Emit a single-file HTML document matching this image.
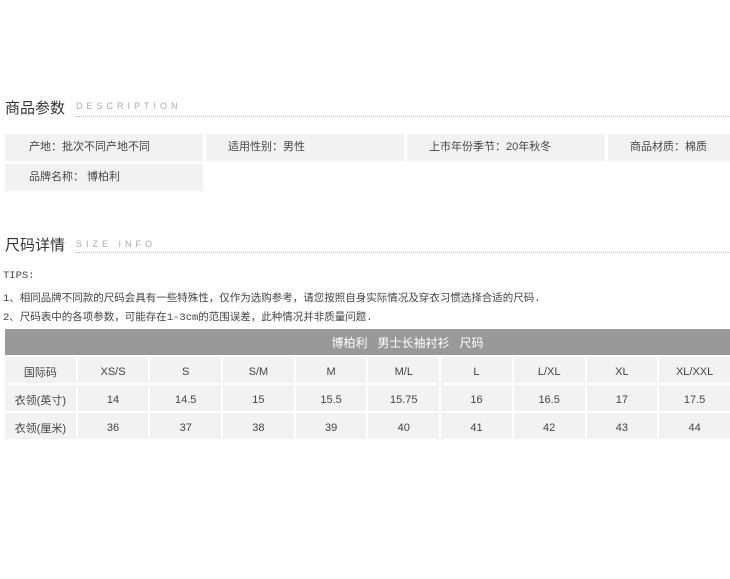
<!DOCTYPE html>
<html><head><meta charset="utf-8"><style>
*{margin:0;padding:0;box-sizing:border-box}
body{width:730px;height:579px;background:#fff;font-family:"Liberation Sans","Noto Sans CJK SC",sans-serif;color:#333;position:relative;overflow:hidden}
.h{position:absolute;left:5px;font-size:15px;color:#333;}
.en{position:absolute;font-size:9px;letter-spacing:4px;color:#aaa;font-family:"Liberation Sans",sans-serif}
.dot{position:absolute;height:0;border-top:1px dotted #bbb;right:0}
.c{position:absolute;background:#f2f2f2;height:27px;line-height:27px;font-size:11px;color:#444}
.t{position:absolute;font-size:10.5px;color:#444;font-family:"Liberation Mono","Noto Sans CJK SC",monospace}
table{position:absolute;left:5px;top:329px;width:727px;border-collapse:separate;border-spacing:0;table-layout:fixed}
td{background:#f2f2f2;text-align:center;font-size:11px;color:#444;height:28px;padding-top:3px;border-right:2px solid #fff;border-bottom:2px solid #fff}
th{background:#999;color:#fff;font-weight:normal;font-size:12px;height:28px;border-bottom:2px solid #fff;border-right:2px solid #fff;padding-left:80px}
</style></head><body>
<div class="h" style="top:97px">商品参数</div>
<div class="en" style="left:76px;top:101px">DESCRIPTION</div>
<div class="dot" style="left:76px;top:116px"></div>
<div class="c" style="left:5px;top:134px;width:198px;padding-left:24px">产地：批次不同产地不同</div>
<div class="c" style="left:206px;top:134px;width:198px;padding-left:22px">适用性别：男性</div>
<div class="c" style="left:407px;top:134px;width:198px;padding-left:22px">上市年份季节：20年秋冬</div>
<div class="c" style="left:608px;top:134px;width:122px;padding-left:22px">商品材质：棉质</div>
<div class="c" style="left:5px;top:164px;width:198px;padding-left:24px">品牌名称： 博柏利</div>
<div class="h" style="top:234px">尺码详情</div>
<div class="en" style="left:76px;top:239px">SIZE INFO</div>
<div class="dot" style="left:76px;top:252px"></div>
<div class="t" style="left:3px;top:270px">TIPS:</div>
<div class="t" style="left:3px;top:290px">1、相同品牌不同款的尺码会具有一些特殊性，仅作为选购参考，请您按照自身实际情况及穿衣习惯选择合适的尺码.</div>
<div class="t" style="left:3px;top:309px">2、尺码表中的各项参数，可能存在1-3cm的范围误差，此种情况并非质量问题.</div>
<table>
<tr><th colspan="10">博柏利&nbsp;&nbsp;&nbsp;男士长袖衬衫&nbsp;&nbsp;&nbsp;尺码</th></tr>
<tr><td>国际码</td><td>XS/S</td><td>S</td><td>S/M</td><td>M</td><td>M/L</td><td>L</td><td>L/XL</td><td>XL</td><td>XL/XXL</td></tr>
<tr><td>衣领(英寸)</td><td>14</td><td>14.5</td><td>15</td><td>15.5</td><td>15.75</td><td>16</td><td>16.5</td><td>17</td><td>17.5</td></tr>
<tr><td>衣领(厘米)</td><td>36</td><td>37</td><td>38</td><td>39</td><td>40</td><td>41</td><td>42</td><td>43</td><td>44</td></tr>
</table>
</body></html>
